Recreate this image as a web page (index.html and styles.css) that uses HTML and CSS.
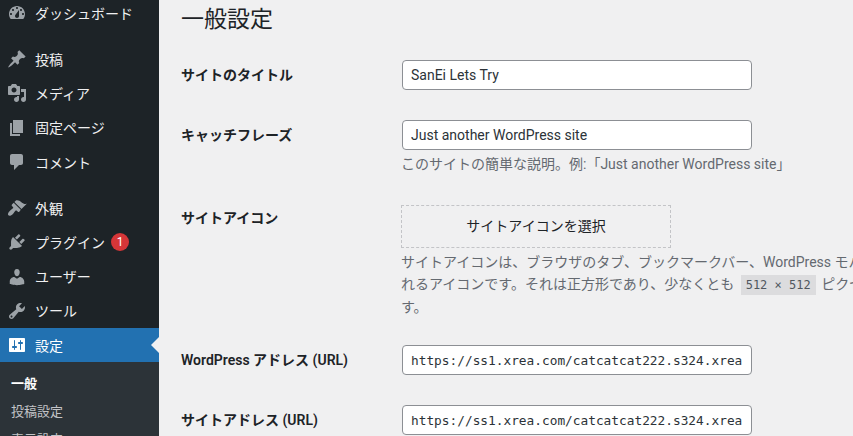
FILE: index.html
```html
<!DOCTYPE html>
<html lang="ja">
<head>
<meta charset="utf-8">
<title>一般設定</title>
<link rel="stylesheet" href="styles.css">
</head>
<body>
<div class="layout">
<nav class="sidebar">
  <ul class="menu">
    <li class="item"><svg class="icon" viewBox="0 0 20 20"><path fill-rule="evenodd" d="M3.76 16h12.48c1.1-1.37 1.76-3.11 1.76-5 0-4.42-3.58-8-8-8s-8 3.58-8 8c0 1.89.66 3.63 1.76 5zM10 4c.55 0 1 .45 1 1s-.45 1-1 1-1-.45-1-1 .45-1 1-1zM6 6c.55 0 1 .45 1 1s-.45 1-1 1-1-.45-1-1 .45-1 1-1zm8 0c.55 0 1 .45 1 1s-.45 1-1 1-1-.45-1-1 .45-1 1-1zm-5.37 5.55L12 7v6c0 1.1-.9 2-2 2s-2-.9-2-2c0-.57.24-1.08.63-1.45zM4 10c.55 0 1 .45 1 1s-.45 1-1 1-1-.45-1-1 .45-1 1-1zm12 0c.55 0 1 .45 1 1s-.45 1-1 1-1-.45-1-1 .45-1 1-1z"/></svg><span>ダッシュボード</span></li>
    <li class="item first"><svg class="icon" viewBox="0 0 20 20"><path d="M10.44 3.02l1.82-1.82 6.36 6.35-1.83 1.82c-1.05-.68-2.48-.57-3.41.36l-.75.75c-.92.93-1.04 2.35-.35 3.41l-1.83 1.82-2.41-2.41-2.8 2.79c-.42.42-3.38 2.71-3.8 2.29s1.86-3.39 2.28-3.81l2.79-2.79L4.1 9.36l1.83-1.82c1.05.69 2.48.57 3.4-.36l.75-.75c.93-.92 1.05-2.35.36-3.41z"/></svg><span>投稿</span></li>
    <li class="item"><svg class="icon" viewBox="0 0 20 20"><path fill-rule="evenodd" d="M13 11V4c0-.55-.45-1-1-1h-1.67L9 1H5L3.67 3H2c-.55 0-1 .45-1 1v7c0 .55.45 1 1 1h10c.55 0 1-.45 1-1zM7 4.5c1.38 0 2.5 1.12 2.5 2.5S8.38 9.5 7 9.5 4.5 8.38 4.5 7 5.62 4.5 7 4.5zM14 6h5v10.5c0 1.38-1.12 2.5-2.5 2.5S14 17.88 14 16.5s1.12-2.5 2.5-2.5c.17 0 .34.02.5.05V9h-3V6zm-4 8.05V13h2v3.5c0 1.38-1.12 2.5-2.5 2.5S7 17.88 7 16.5 8.12 14 9.5 14c.17 0 .34.02.5.05z"/></svg><span>メディア</span></li>
    <li class="item"><svg class="icon" viewBox="0 0 20 20"><path d="M6 15V2h10v13H6zm-1 1h8v2H3V5h2v11z"/></svg><span>固定ページ</span></li>
    <li class="item"><svg class="icon" viewBox="0 0 20 20"><path d="M5 2h9c1.1 0 2 .9 2 2v7c0 1.1-.9 2-2 2h-2l-5 5v-5H5c-1.1 0-2-.9-2-2V4c0-1.1.9-2 2-2z"/></svg><span>コメント</span></li>
    <li class="item first"><svg class="icon" viewBox="0 0 20 20"><path d="M14.48 11.06L7.41 3.99l1.5-1.5c.5-.56 2.3-.47 3.51.32 1.21.8 1.43 1.28 2.91 2.1 1.18.64 2.45 1.26 4.45.85zm-.71.71L6.7 4.7 4.93 6.47c-.39.39-.39 1.02 0 1.41l1.06 1.06c.39.39.39 1.03 0 1.42-.6.6-1.43 1.11-2.21 1.69-.35.26-.7.53-1.01.84-1.35 1.34-2.49 3.35-1.37 4.47 1.13 1.12 3.14-.02 4.48-1.37.31-.31.59-.66.85-1.01.58-.78 1.08-1.61 1.69-2.21.39-.39 1.02-.39 1.41 0l1.06 1.06c.39.39 1.02.39 1.41 0z"/></svg><span>外観</span></li>
    <li class="item"><svg class="icon" viewBox="0 0 20 20"><path d="M13.11 4.36L9.87 7.6 8 5.73l3.24-3.24c.35-.34 1.05-.2 1.56.32.52.51.66 1.21.31 1.55zm-8 1.77l.91-1.12 9.01 9.01-1.19.84c-.71.71-2.63 1.16-3.82 1.16H6.14L4.9 17.26c-.59.59-1.54.59-2.12 0-.59-.58-.59-1.53 0-2.12l1.24-1.24v-3.88c0-1.13.4-3.19 1.09-3.89zm7.26 3.97l3.24-3.24c.34-.35 1.04-.21 1.55.31.52.51.66 1.21.31 1.55l-3.24 3.25z"/></svg><span>プラグイン</span><b class="badge">1</b></li>
    <li class="item"><svg class="icon" viewBox="0 0 20 20"><path d="M10 9.25c-2.27 0-2.73-3.44-2.73-3.44C7 4.02 7.82 2 9.97 2c2.16 0 2.98 2.02 2.71 3.81 0 0-.41 3.44-2.68 3.44zm0 2.57L12.72 10c2.39 0 4.52 2.33 4.52 4.53v2.49s-3.65 1.13-7.24 1.13c-3.65 0-7.24-1.13-7.24-1.13v-2.49c0-2.25 1.94-4.48 4.47-4.48z"/></svg><span>ユーザー</span></li>
    <li class="item"><svg class="icon" viewBox="0 0 20 20"><path fill-rule="evenodd" d="M16.68 9.77c-1.34 1.34-3.3 1.67-4.95.99l-5.41 6.52c-.99.99-2.59.99-3.58 0s-.99-2.59 0-3.57l6.52-5.42c-.68-1.65-.35-3.61.99-4.95 1.28-1.28 3.12-1.62 4.72-1.06l-2.89 2.89 2.82 2.82 2.86-2.87c.53 1.58.18 3.39-1.08 4.65zM3.81 16.21c.4.39 1.04.39 1.43 0 .4-.4.4-1.04 0-1.43-.39-.4-1.03-.4-1.43 0-.39.39-.39 1.03 0 1.43z"/></svg><span>ツール</span></li>
    <li class="item current"><svg class="icon" viewBox="0 0 20 20"><path fill-rule="evenodd" d="M18 16V4c0-.55-.45-1-1-1H3c-.55 0-1 .45-1 1v12c0 .55.45 1 1 1h14c.55 0 1-.45 1-1zM8 11h1c.55 0 1 .45 1 1s-.45 1-1 1H8v1.5c0 .28-.22.5-.5.5s-.5-.22-.5-.5V13H6c-.55 0-1-.45-1-1s.45-1 1-1h1V5.5c0-.28.22-.5.5-.5s.5.22.5.5V11zm5-2h-1c-.55 0-1-.45-1-1s.45-1 1-1h1V5.5c0-.28.22-.5.5-.5s.5.22.5.5V7h1c.55 0 1 .45 1 1s-.45 1-1 1h-1v5.5c0 .28-.22.5-.5.5s-.5-.22-.5-.5V9z"/></svg><span>設定</span><i class="arrow"></i></li>
  </ul>
  <ul class="submenu">
    <li class="sub active">一般</li>
    <li class="sub">投稿設定</li>
    <li class="sub">表示設定</li>
  </ul>
</nav>
<main class="content">
  <h1 class="title">一般設定</h1>
  <div class="form">
    <div class="row r1">
      <label class="label">サイトのタイトル</label>
      <div class="field"><input class="input" type="text" value="SanEi Lets Try"></div>
    </div>
    <div class="row r2">
      <label class="label">キャッチフレーズ</label>
      <div class="field">
        <input class="input" type="text" value="Just another WordPress site">
        <p class="desc gap1">このサイトの簡単な説明。例:「Just another WordPress site」</p>
      </div>
    </div>
    <div class="row r3">
      <label class="label">サイトアイコン</label>
      <div class="field">
        <div class="pick">サイトアイコンを選択</div>
        <p class="desc gap2">サイトアイコンは、ブラウザのタブ、ブックマークバー、WordPress モバイルアプリで表示さ<br>れるアイコンです。それは正方形であり、少なくとも <code class="code">512 × 512</code> ピクセルである必要がありま<br>す。</p>
      </div>
    </div>
    <div class="row r4">
      <label class="label">WordPress アドレス (URL)</label>
      <div class="field"><input class="input mono" type="text" value="https://ss1.xrea.com/catcatcat222.s324.xrea.com"></div>
    </div>
    <div class="row r5">
      <label class="label">サイトアドレス (URL)</label>
      <div class="field"><input class="input mono" type="text" value="https://ss1.xrea.com/catcatcat222.s324.xrea.com"></div>
    </div>
  </div>
</main>
</div>
</body>
</html>
```

FILE: styles.css
```css
* { box-sizing: border-box; }
html, body { margin: 0; height: 436px; overflow: hidden; }
body {
  background: #f0f0f1;
  color: #1d2327;
  font-family: Roboto, "Noto Sans CJK JP", sans-serif;
  font-size: 14px;
}
.layout { display: flex; height: 436px; overflow: hidden; }
.sidebar { width: 159px; flex: none; background: #1d2327; height: 436px; overflow: hidden; }
.menu, .submenu { list-style: none; margin: 0; padding: 0; }
.menu { margin-top: -4px; }
.item {
  display: flex; align-items: center; position: relative;
  height: 34.3px; padding-left: 7px; gap: 8px;
  color: #f0f0f1; font-size: 14px; white-space: nowrap;
}
.item span { margin-top: -1px; }
.item.first { margin-top: 11.7px; }
.icon { width: 20px; height: 20px; fill: #9ca2a7; flex: none; }
.current { background: #2271b1; color: #fff; }
.current .icon { fill: #fff; }
.arrow {
  position: absolute; right: 0; top: 50%; margin-top: -8px;
  border: 8px solid transparent; border-right-color: #f0f0f1; border-left-width: 0;
}
.badge {
  display: inline-flex; align-items: center; justify-content: center;
  width: 18px; height: 18px; border-radius: 50%; margin-left: -2px;
  background: #d63638; color: #fff; font-size: 12px; font-weight: 400;
}
.submenu { background: #2c3338; padding-top: 8px; height: 100px; }
.sub { height: 28px; line-height: 28px; padding-left: 11px; font-size: 13px; color: #c3c4c7; }
.sub.active { color: #fff; font-weight: 600; }
.content { flex: 1; min-width: 0; padding-left: 22px; overflow: hidden; }
.title { margin: 5px 0 0; font-size: 23px; font-weight: 400; line-height: 29px; }
.form { margin-top: 26px; }
.row { display: flex; white-space: nowrap; }
.label { width: 220px; flex: none; font-weight: 600; color: #1d2327; line-height: 30px; }
.r2 { margin-top: 30px; }
.r3 { margin-top: 30px; }
.r4 { margin-top: 27px; }
.r5 { margin-top: 30px; }
.r3 .label { line-height: 26px; }
.input {
  display: block; width: 350px; height: 30px; margin: 0 0 0 1px; padding: 0 8px;
  background: #fff; border: 1px solid #8c8f94; border-radius: 4px; color: #2c3338;
  font-family: Roboto, "Noto Sans CJK JP", sans-serif; font-size: 14px; outline: none;
}
.input.mono { font-family: "DejaVu Sans Mono", monospace; font-size: 12.8px; }
.desc { margin: 0; color: #646970; line-height: 22px; }
.gap1 { margin-top: 3px; }
.gap2 { margin-top: 3px; }
.pick {
  width: 270px; height: 43px; line-height: 41px; text-align: center;
  border: 1px dashed #c3c4c7; color: #1d2327;
}
.code {
  font-family: "DejaVu Sans Mono", monospace; font-size: 12px; background: #dcdcde;
  padding: 3px 5px; margin: 0 2px 0 3px; color: #50575e;
}
```
